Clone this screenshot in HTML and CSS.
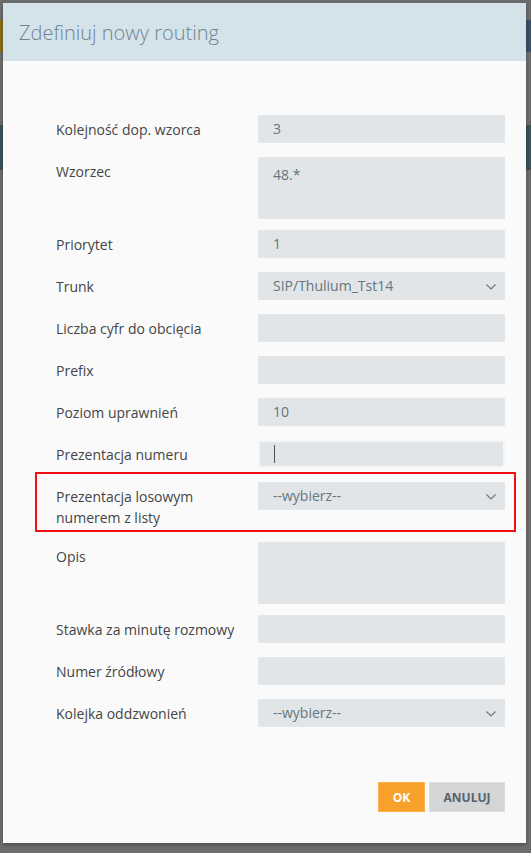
FILE: index.html
```html
<!DOCTYPE html>
<html lang="pl">
<head>
    <meta charset="UTF-8">
    <meta name="viewport" content="width=device-width, initial-scale=1.0">
    <title>Routing</title>
    <link rel="stylesheet" href="styles.css">
</head>
<body>
    <!-- dimmed page under the dialog -->
    <div class="page">
        <div class="page-bar"></div>
        <div class="page-band"></div>
    </div>

    <div class="modal">
        <div class="modal-header">Zdefiniuj nowy routing</div>

        <form class="modal-body">
            <div class="row">
                <label>Kolejność dop. wzorca</label>
                <div class="field">3</div>
            </div>
            <div class="row row-area">
                <label>Wzorzec</label>
                <div class="field area">48.*</div>
            </div>
            <div class="row">
                <label>Priorytet</label>
                <div class="field">1</div>
            </div>
            <div class="row">
                <label>Trunk</label>
                <div class="field select">SIP/Thulium_Tst14
                    <svg class="chevron" viewBox="0 0 10 6"><path d="M0.5 0.5 L5 5 L9.5 0.5"/></svg>
                </div>
            </div>
            <div class="row">
                <label>Liczba cyfr do obcięcia</label>
                <div class="field"></div>
            </div>
            <div class="row">
                <label>Prefix</label>
                <div class="field"></div>
            </div>
            <div class="row">
                <label>Poziom uprawnień</label>
                <div class="field">10</div>
            </div>
            <div class="row">
                <label>Prezentacja numeru</label>
                <div class="field focused"><span class="caret"></span></div>
            </div>
            <div class="row marked">
                <label>Prezentacja losowym numerem z listy</label>
                <div class="field select">--wybierz--
                    <svg class="chevron" viewBox="0 0 10 6"><path d="M0.5 0.5 L5 5 L9.5 0.5"/></svg>
                </div>
            </div>
            <div class="row row-area">
                <label>Opis</label>
                <div class="field area"></div>
            </div>
            <div class="row">
                <label>Stawka za minutę rozmowy</label>
                <div class="field"></div>
            </div>
            <div class="row">
                <label>Numer źródłowy</label>
                <div class="field"></div>
            </div>
            <div class="row">
                <label>Kolejka oddzwonień</label>
                <div class="field select">--wybierz--
                    <svg class="chevron" viewBox="0 0 10 6"><path d="M0.5 0.5 L5 5 L9.5 0.5"/></svg>
                </div>
            </div>

            <div class="actions">
                <button type="submit" class="btn btn-ok">OK</button>
                <button type="button" class="btn btn-cancel">ANULUJ</button>
            </div>
        </form>
    </div>
</body>
</html>
```

FILE: styles.css
```css
body {
    margin: 0;
    height: 853px;
    overflow: hidden;
    background-color: #6d6d6d;
    font-family: "Open Sans", Arial, sans-serif;
}

.page {
    padding-top: 20px;
}

.page-bar {
    height: 32px;
    background: linear-gradient(to right, #8a6e16 0, #8a6e16 10px, #3e4f6c 10px);
}

.page-band {
    margin-top: 73px;
    height: 45px;
    background-color: #3d525b;
}

.modal {
    position: absolute;
    left: 3px;
    top: 3px;
    width: 523px;
    height: 840px;
    background-color: #fafafa;
    box-shadow: 0 2px 4px rgba(0, 0, 0, 0.3);
}

.modal-header {
    height: 58px;
    padding-left: 16px;
    background-color: #d4e2ea;
    color: #718391;
    font-size: 20px;
    font-weight: 300;
    line-height: 60px;
}

.modal-body {
    padding: 54px 21px 30px 53px;
}

.row {
    position: relative;
    display: flex;
    margin-bottom: 14px;
}

.row-area {
    margin-bottom: 11px;
}

.row label {
    width: 202px;
    flex-shrink: 0;
    padding: 4px 20px 0 0;
    box-sizing: border-box;
    color: #454545;
    font-size: 14px;
    line-height: 21px;
}

.field {
    position: relative;
    flex: 1;
    height: 28px;
    padding: 0 14px;
    box-sizing: border-box;
    background-color: #e1e5e7;
    border: 1px solid #e4e7e9;
    color: #66757f;
    font-size: 14px;
    line-height: 26px;
}

.field.area {
    height: 62px;
    padding-top: 4px;
}

.field.focused {
    border: 2px solid #f4f5f6;
}

.caret {
    display: inline-block;
    width: 1px;
    height: 18px;
    margin-top: 3px;
    background-color: #44525d;
    vertical-align: top;
}

.chevron {
    position: absolute;
    right: 8px;
    top: 11px;
    width: 10px;
    height: 6px;
    fill: none;
    stroke: #6a7883;
    stroke-width: 1.2;
}

/* red frame drawn around a row */
.marked::after {
    content: "";
    position: absolute;
    left: -21px;
    right: -11px;
    top: -10px;
    bottom: -4px;
    border: 2px solid #f01010;
}

.marked {
    margin-bottom: 14px;
}

.actions {
    display: flex;
    justify-content: flex-end;
    gap: 4px;
    margin-top: 55px;
}

.btn {
    height: 30px;
    border: 1px solid transparent;
    font-family: "Open Sans", Arial, sans-serif;
    font-size: 12px;
    font-weight: 700;
    cursor: pointer;
}

.btn-ok {
    width: 47px;
    background-color: #f7a12a;
    border-color: #fbb24c;
    color: #fff;
}

.btn-cancel {
    width: 76px;
    background-color: #d3d5d7;
    border-color: #dcdee0;
    color: #55636d;
}
```
